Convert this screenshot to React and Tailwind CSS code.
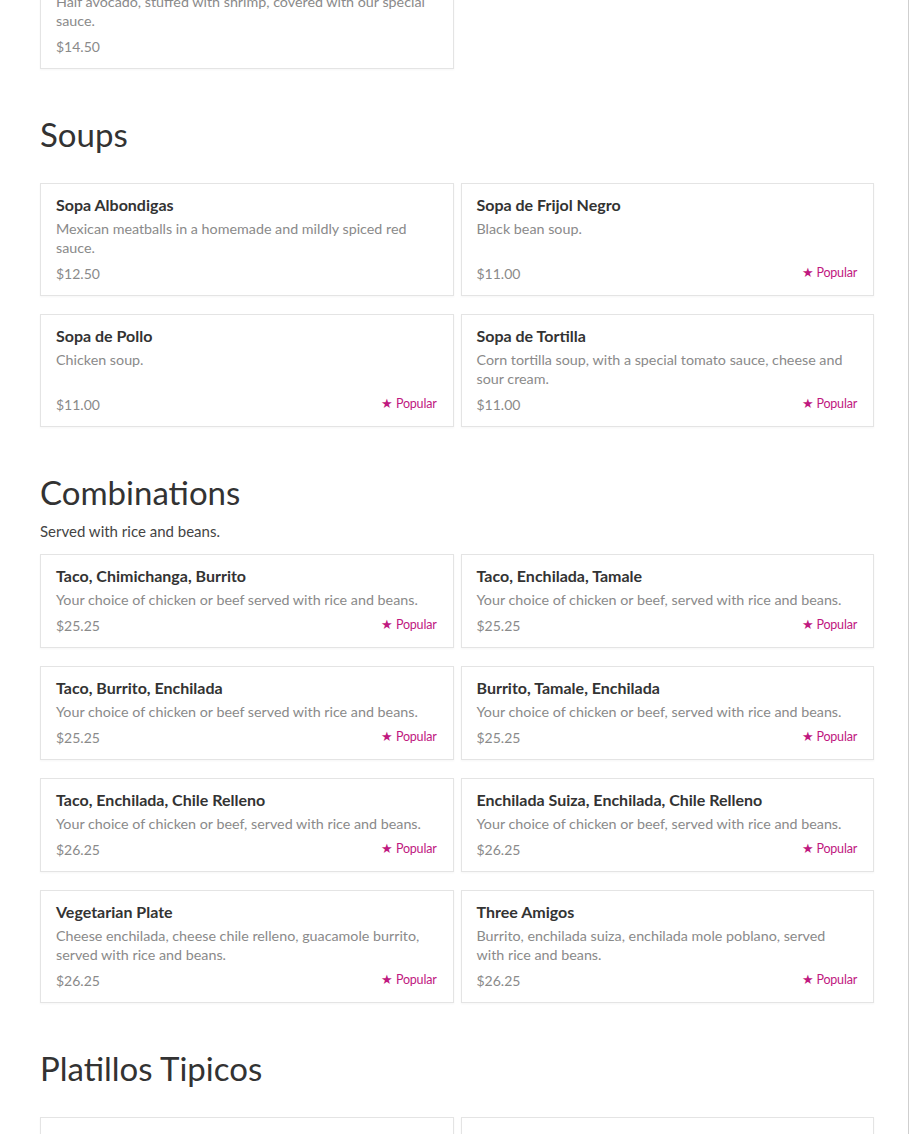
const soups = [
  { name: 'Sopa Albondigas', desc: 'Mexican meatballs in a homemade and mildly spiced red sauce.', price: '$12.50' },
  { name: 'Sopa de Frijol Negro', desc: 'Black bean soup.', price: '$11.00', popular: true },
  { name: 'Sopa de Pollo', desc: 'Chicken soup.', price: '$11.00', popular: true },
  { name: 'Sopa de Tortilla', desc: 'Corn tortilla soup, with a special tomato sauce, cheese and sour cream.', price: '$11.00', popular: true },
];

const combos = [
  { name: 'Taco, Chimichanga, Burrito', desc: 'Your choice of chicken or beef served with rice and beans.', price: '$25.25', popular: true },
  { name: 'Taco, Enchilada, Tamale', desc: 'Your choice of chicken or beef, served with rice and beans.', price: '$25.25', popular: true },
  { name: 'Taco, Burrito, Enchilada', desc: 'Your choice of chicken or beef served with rice and beans.', price: '$25.25', popular: true },
  { name: 'Burrito, Tamale, Enchilada', desc: 'Your choice of chicken or beef, served with rice and beans.', price: '$25.25', popular: true },
  { name: 'Taco, Enchilada, Chile Relleno', desc: 'Your choice of chicken or beef, served with rice and beans.', price: '$26.25', popular: true },
  { name: 'Enchilada Suiza, Enchilada, Chile Relleno', desc: 'Your choice of chicken or beef, served with rice and beans.', price: '$26.25', popular: true },
  { name: 'Vegetarian Plate', desc: 'Cheese enchilada, cheese chile relleno, guacamole burrito, served with rice and beans.', price: '$26.25', popular: true },
  { name: 'Three Amigos', desc: 'Burrito, enchilada suiza, enchilada mole poblano, served with rice and beans.', price: '$26.25', popular: true },
];

const tipicos = [
  { name: 'Chile Verde', desc: 'Pork chunks in a green tomatillo sauce.', price: '$24.00' },
  { name: 'Chile Colorado', desc: 'Beef chunks in a red chile sauce.', price: '$24.00' },
];

function MenuCard({ item }) {
  return (
    <div className="flex flex-col bg-white border border-[#e4e4e4] shadow-[0_1px_2px_rgba(0,0,0,0.04)] pl-[15px] pr-4 pt-[11px] pb-[11px]">
      <h3 className="text-[16px] leading-5 font-bold text-[#333]">{item.name}</h3>
      <p className="mt-1 pr-[3px] text-[14.3px] leading-[19px] text-[#8a8a8a]">{item.desc}</p>
      <div className="mt-auto pt-[7px] flex items-start justify-between">
        <span className="text-[14px] leading-5 text-[#8a8a8a]">{item.price}</span>
        {item.popular && (
          <span className="text-[12.5px] leading-[17px] tracking-[-0.2px] text-[#c0187f]">★ Popular</span>
        )}
      </div>
    </div>
  );
}

function Section({ title, subtitle, items }) {
  return (
    <section className="mt-[43px]">
      <h2 className="text-[33px] leading-[44px] text-[#333]">{title}</h2>
      {subtitle && <p className="mt-[7px] text-[15px] leading-5 text-[#444]">{subtitle}</p>}
      <div className={`grid grid-cols-2 gap-x-[7px] gap-y-[18px] ${subtitle ? 'mt-[13px]' : 'mt-[27px]'}`}>
        {items.map((item) => (
          <MenuCard key={item.name} item={item} />
        ))}
      </div>
    </section>
  );
}

export default function App() {
  return (
    <div className="w-[909px] min-h-[1134px] border-r border-[#cfcfcf] bg-white overflow-hidden font-['Lato',sans-serif]">
      <div className="mx-[40px] w-[834px] mt-[-44px] pb-10">
        <div className="grid grid-cols-2 gap-x-[7px]">
          <MenuCard item={{ name: 'Aguacate Relleno', desc: 'Half avocado, stuffed with shrimp, covered with our special sauce.', price: '$14.50' }} />
        </div>
        <Section title="Soups" items={soups} />
        <Section title="Combinations" subtitle="Served with rice and beans." items={combos} />
        <Section title="Platillos Tipicos" items={tipicos} />
      </div>
    </div>
  );
}
